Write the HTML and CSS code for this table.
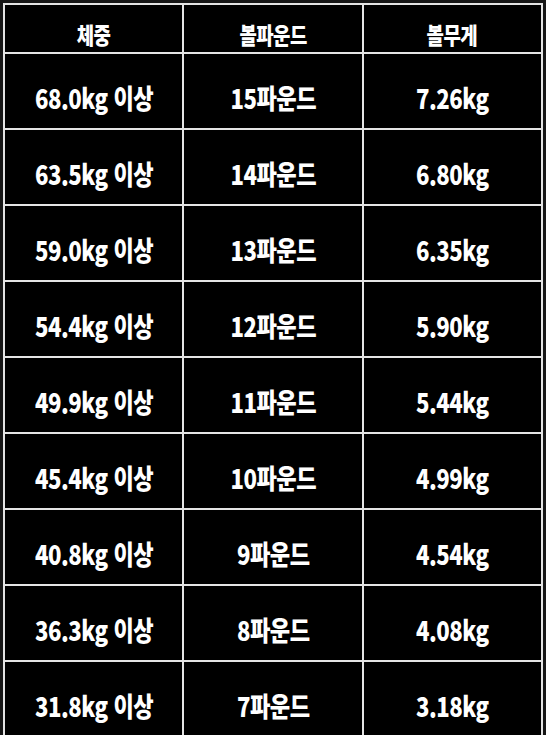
FILE: index.html
```html
<!DOCTYPE html>
<html lang="ko">
<head>
<meta charset="utf-8">
<link rel="stylesheet" href="styles.css">
</head>
<body>
<div class="chart">
  <div class="cell head"><span>체중</span></div>
  <div class="cell head"><span>볼파운드</span></div>
  <div class="cell head"><span>볼무게</span></div>

  <div class="cell"><span>68.0kg 이상</span></div>
  <div class="cell"><span>15파운드</span></div>
  <div class="cell"><span>7.26kg</span></div>

  <div class="cell"><span>63.5kg 이상</span></div>
  <div class="cell"><span>14파운드</span></div>
  <div class="cell"><span>6.80kg</span></div>

  <div class="cell"><span>59.0kg 이상</span></div>
  <div class="cell"><span>13파운드</span></div>
  <div class="cell"><span>6.35kg</span></div>

  <div class="cell"><span>54.4kg 이상</span></div>
  <div class="cell"><span>12파운드</span></div>
  <div class="cell"><span>5.90kg</span></div>

  <div class="cell"><span>49.9kg 이상</span></div>
  <div class="cell"><span>11파운드</span></div>
  <div class="cell"><span>5.44kg</span></div>

  <div class="cell"><span>45.4kg 이상</span></div>
  <div class="cell"><span>10파운드</span></div>
  <div class="cell"><span>4.99kg</span></div>

  <div class="cell"><span>40.8kg 이상</span></div>
  <div class="cell"><span>9파운드</span></div>
  <div class="cell"><span>4.54kg</span></div>

  <div class="cell"><span>36.3kg 이상</span></div>
  <div class="cell"><span>8파운드</span></div>
  <div class="cell"><span>4.08kg</span></div>

  <div class="cell"><span>31.8kg 이상</span></div>
  <div class="cell"><span>7파운드</span></div>
  <div class="cell"><span>3.18kg</span></div>
</div>
</body>
</html>
```

FILE: styles.css
```css
html, body {
  margin: 0;
  padding: 0;
  background: #161616;
}
body {
  padding: 3px 0 0 3px;
  font-family: "Noto Sans CJK KR", "Noto Sans", sans-serif;
}
.chart {
  width: 536px;
  padding: 2px;
  gap: 2px;
  background: #e4e4e4;
  display: grid;
  grid-template-columns: 1fr 1fr 1fr;
  grid-template-rows: 47px repeat(9, 74px);
}
.cell {
  background: #000;
  color: #fff;
  display: flex;
  align-items: center;
  justify-content: center;
  padding-top: 12px;
  box-sizing: border-box;
  font-size: 27px;
  font-weight: 900;
  line-height: 1;
}
.cell.head {
  padding-top: 11px;
  font-size: 23px;
}
.cell span {
  display: inline-block;
  transform: scaleX(0.82);
  letter-spacing: -0.6px;
  white-space: nowrap;
}
```
